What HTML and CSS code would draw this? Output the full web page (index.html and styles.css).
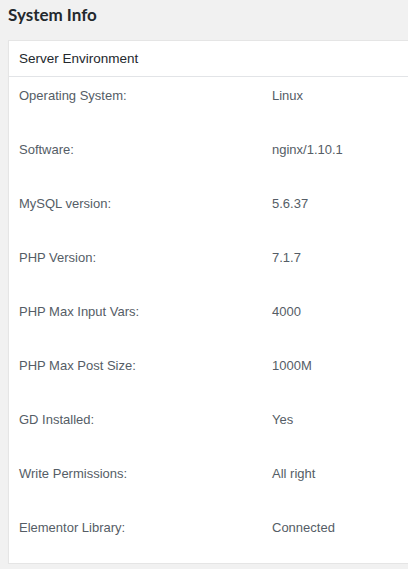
FILE: index.html
```html
<!DOCTYPE html>
<html>
<head>
<meta charset="utf-8">
<link rel="stylesheet" href="styles.css">
</head>
<body>
<div class="page">
  <h2 class="title">System Info</h2>
  <div class="card">
    <div class="card-head">Server Environment</div>
    <div class="rows">
      <div class="row"><span class="label">Operating System:</span><span class="value">Linux</span></div>
      <div class="row"><span class="label">Software:</span><span class="value">nginx/1.10.1</span></div>
      <div class="row"><span class="label">MySQL version:</span><span class="value">5.6.37</span></div>
      <div class="row"><span class="label">PHP Version:</span><span class="value">7.1.7</span></div>
      <div class="row"><span class="label">PHP Max Input Vars:</span><span class="value">4000</span></div>
      <div class="row"><span class="label">PHP Max Post Size:</span><span class="value">1000M</span></div>
      <div class="row"><span class="label">GD Installed:</span><span class="value">Yes</span></div>
      <div class="row"><span class="label">Write Permissions:</span><span class="value">All right</span></div>
      <div class="row"><span class="label">Elementor Library:</span><span class="value">Connected</span></div>
    </div>
  </div>
</div>
</body>
</html>
```
FILE: styles.css
```css
html, body {
  margin: 0;
  padding: 0;
  background: #f1f1f1;
  overflow: hidden;
}
.page {
  width: 420px;
  padding: 0 0 0 8px;
  font-family: "Liberation Sans", Arial, sans-serif;
  color: #444;
}
.title {
  margin: 0;
  height: 40px;
  line-height: 29px;
  font-family: "Lato", "Liberation Sans", sans-serif;
  font-size: 17px;
  font-weight: 700;
  color: #23282d;
}
.card {
  background: #fff;
  border: 1px solid #e5e5e5;
  box-shadow: 0 1px 1px rgba(0,0,0,0.04);
}
.card-head {
  height: 35px;
  line-height: 36px;
  padding-left: 10px;
  font-size: 13.5px;
  color: #23282d;
  border-bottom: 1px solid #e2e4e7;
}
.row {
  display: flex;
  height: 54px;
  box-sizing: border-box;
  padding: 10px 0 0 10px;
  line-height: 18px;
  font-size: 13px;
  color: #555d66;
}
.label {
  width: 253px;
}
```
